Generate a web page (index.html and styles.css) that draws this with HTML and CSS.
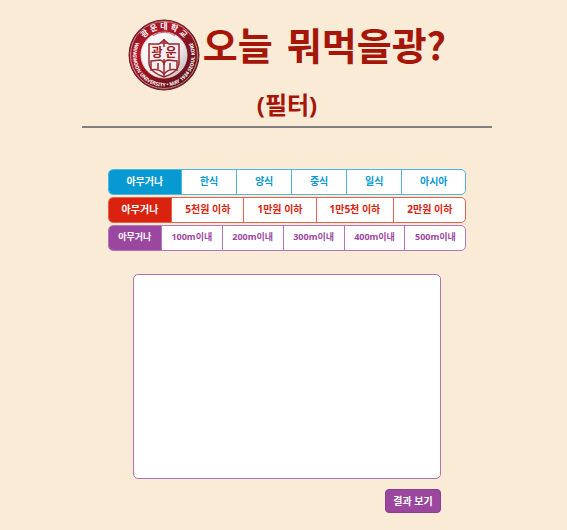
FILE: index.html
```html
<!DOCTYPE html>
<html lang="ko">
<head>
<meta charset="utf-8">
<meta name="viewport" content="width=device-width, initial-scale=1">
<title>오늘 뭐먹을광?</title>
<link rel="stylesheet" href="styles.css">
</head>
<body>
<main class="page">
  <header class="header">
    <div class="brand">
      <svg class="logo" viewBox="0 0 72 72" role="img" aria-label="광운대학교">
        <defs>
          <linearGradient id="ring" x1="0" y1="0" x2="1" y2="1">
            <stop offset="0" stop-color="#6b1018"/>
            <stop offset=".3" stop-color="#b5182a"/>
            <stop offset=".55" stop-color="#8a1420"/>
            <stop offset="1" stop-color="#4d1117"/>
          </linearGradient>
          <linearGradient id="disc" x1="0" y1="0" x2="1" y2="1">
            <stop offset="0" stop-color="#ffffff"/>
            <stop offset=".6" stop-color="#eeeaea"/>
            <stop offset="1" stop-color="#b9b2b3"/>
          </linearGradient>
          <path id="arc-top" d="M10 36a26 26 0 0 1 52 0"/>
          <path id="arc-bottom" d="M8.600 22a31 31 0 1 0 54.800 0"/>
          <path id="arc-motto" d="M17 33a19 19 0 0 1 38 0"/>
        </defs>
        <circle cx="36" cy="36" r="35" fill="url(#ring)" stroke="#6d1a20"/>
        <circle cx="36" cy="36" r="33.500" fill="none" stroke="#d9b9b9" stroke-width=".7"/>
        <circle cx="36" cy="36" r="23" fill="url(#disc)" stroke="#e8d4d4"/>
        <text class="seal-ko"><textPath href="#arc-top" startOffset="50%">광 운 대 학 교</textPath></text>
        <text class="seal-en"><textPath href="#arc-bottom" startOffset="50%">KWANGWOON UNIVERSITY • MAY 1934 SEOUL KOREA</textPath></text>
        <text class="seal-motto"><textPath href="#arc-motto" startOffset="50%">VERITAS et LUX</textPath></text>
        <path d="M21 25h10l5-4 5 4h10v20q-1 8-15 13Q22 53 21 45z" fill="#f5eeee" stroke="#9b2730" stroke-width="1.500"/>
        <path d="M36 20v37M32 24h8" fill="none" stroke="#9b2730" stroke-width="1.500"/>
        <path d="M22 28h28v12H22z" fill="#f5eeee"/>
        <text class="seal-name" x="36" y="38">광 운</text>
        <path d="M23 42l9-1q4 1 4 5 0-4 4-5l9 1v9q-8-2-13 4-5-6-13-4zM30 44v6M42 44v6" fill="none" stroke="#9b2730" stroke-width="1.500"/>
      </svg>
      <h1 class="title"><span>오늘</span> <span>뭐먹을광?</span></h1>
    </div>
    <h2 class="subtitle">(필터)</h2>
  </header>

  <section class="filters" aria-label="필터">
    <div class="group group-blue" role="group" aria-label="음식 종류">
      <button type="button" aria-pressed="true">아무거나</button>
      <button type="button" aria-pressed="false">한식</button>
      <button type="button" aria-pressed="false">양식</button>
      <button type="button" aria-pressed="false">중식</button>
      <button type="button" aria-pressed="false">일식</button>
      <button type="button" aria-pressed="false">아시아</button>
    </div>
    <div class="group group-red" role="group" aria-label="가격">
      <button type="button" aria-pressed="true">아무거나</button>
      <button type="button" aria-pressed="false">5천원 이하</button>
      <button type="button" aria-pressed="false">1만원 이하</button>
      <button type="button" aria-pressed="false">1만5천 이하</button>
      <button type="button" aria-pressed="false">2만원 이하</button>
    </div>
    <div class="group group-purple" role="group" aria-label="거리">
      <button type="button" aria-pressed="true">아무거나</button>
      <button type="button" aria-pressed="false">100m이내</button>
      <button type="button" aria-pressed="false">200m이내</button>
      <button type="button" aria-pressed="false">300m이내</button>
      <button type="button" aria-pressed="false">400m이내</button>
      <button type="button" aria-pressed="false">500m이내</button>
    </div>
  </section>

  <section class="results">
    <div class="panel"></div>
    <button class="submit" type="button">결과 보기</button>
  </section>
</main>
</body>
</html>
```
FILE: styles.css
```css
* {
  box-sizing: border-box;
}

body {
  margin: 0;
  background: #faebd7;
  font-family: "Noto Sans", "Noto Sans CJK KR", sans-serif;
}

.page {
  padding: 19px 75px 17px 82px;
}

.header {
  border-bottom: 2px solid #808080;
  color: #a51609;
  text-align: center;
}

.brand {
  display: flex;
  justify-content: center;
  gap: 3px;
}

.logo {
  flex: none;
  width: 72px;
  height: 72px;
}

.logo text {
  fill: #fff;
  font-weight: 700;
  text-anchor: middle;
}

.logo .seal-ko {
  font-size: 8px;
}

.logo .seal-en {
  font-size: 5px;
}

.logo .seal-motto {
  fill: #9b2730;
  font-size: 3px;
}

.logo .seal-name {
  fill: #9b1722;
  font-size: 12px;
}

.title {
  display: flex;
  gap: 14px;
  margin: 0;
  font-family: "Noto Sans CJK KR", sans-serif;
  font-size: 38px;
  font-weight: 700;
  line-height: 50px;
}

.subtitle {
  margin: 0;
  font-size: 24px;
  font-weight: 700;
  line-height: 28px;
  padding-bottom: 7px;
}

.filters {
  display: grid;
  gap: 2px;
  width: 88%;
  margin: 41px auto 23px;
  padding: 0 1px;
}

.group {
  display: flex;
  height: 26px;
  overflow: hidden;
  border: 1px solid var(--line);
  border-radius: 5px;
  background: #fff;
}

.group button {
  flex: 1 1 auto;
  padding: 0 0 2px;
  border: 0;
  border-left: 1px solid var(--line);
  background: none;
  color: var(--tone);
  font: 700 10px/20px "Noto Sans", "Noto Sans CJK KR", sans-serif;
  white-space: nowrap;
}

.group button:first-child {
  border-left: 0;
}

.group button[aria-pressed="true"] {
  background: var(--tone);
  color: #fff;
}

.group-blue {
  --tone: #0699d2;
  --line: #4fb6d9;
}

.group-red {
  --tone: #d9230f;
  --line: #e9604f;
}

.group-purple {
  --tone: #9b479f;
  --line: #b677b8;
}

.group-purple button {
  font-size: 9px;
}

.results {
  display: flex;
  flex-direction: column;
  align-items: flex-end;
  gap: 10px;
  width: 75%;
  margin: 0 auto;
}

.panel {
  width: 100%;
  height: 205px;
  border: 1px solid #b273b5;
  border-radius: 5px;
  background: #fff;
}

.submit {
  height: 24px;
  padding: 0 7px;
  border: 1px solid #883f8c;
  border-radius: 4px;
  background: #9b479f;
  color: #fff;
  font: 700 10px/20px "Noto Sans", "Noto Sans CJK KR", sans-serif;
}
```
